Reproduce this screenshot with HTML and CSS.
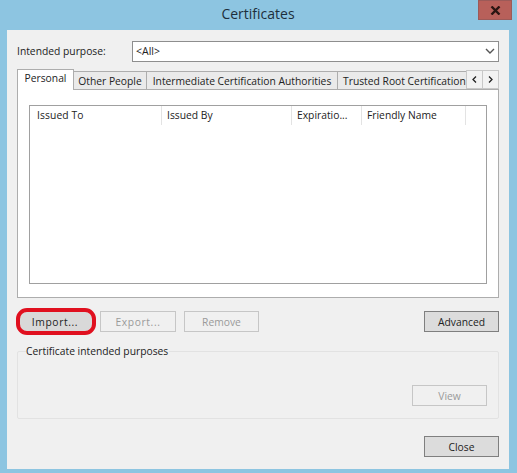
FILE: index.html
```html
<!DOCTYPE html>
<html lang="en">
<head>
<meta charset="utf-8">
<title>Certificates</title>
<link rel="stylesheet" href="styles.css">
</head>
<body>
<div class="window">
  <header class="titlebar">
    <span class="title">Certificates</span>
    <span class="close-x"><svg width="11" height="9" viewBox="0 0 11 9"><path d="M1.5 .5l8 8M9.5 .5l-8 8" fill="none" stroke="#2a1512" stroke-width="2.4"/></svg></span>
  </header>
  <main class="dialog">
    <div class="purpose">
      <label class="purpose-label">Intended purpose:</label>
      <div class="combo"><span>&lt;All&gt;</span><svg width="10" height="6" viewBox="0 0 10 6"><path d="M1 1l4 4 4-4" fill="none" stroke="#555" stroke-width="1.4"/></svg></div>
    </div>
    <div class="tabstrip">
      <div class="tab active">Personal</div>
      <div class="tab t-other">Other People</div>
      <div class="tab t-inter">Intermediate Certification Authorities</div>
      <div class="tab t-root">Trusted Root Certification</div>
      <div class="spin">
        <span><svg width="5" height="7" viewBox="0 0 5 7"><path d="M4 .5 1 3.5l3 3" fill="none" stroke="#222" stroke-width="1.3"/></svg></span>
        <span><svg width="5" height="7" viewBox="0 0 5 7"><path d="M1 .5l3 3-3 3" fill="none" stroke="#222" stroke-width="1.3"/></svg></span>
      </div>
    </div>
    <div class="panel">
      <div class="list">
        <div class="list-head">
          <div class="col c1">Issued To</div>
          <div class="col c2">Issued By</div>
          <div class="col c3">Expiratio...</div>
          <div class="col c4">Friendly Name</div>
        </div>
      </div>
    </div>
    <div class="actions">
      <button class="btn import">Import...</button>
      <button class="btn disabled export">Export...</button>
      <button class="btn disabled remove">Remove</button>
      <button class="btn advanced">Advanced</button>
    </div>
    <section class="group">
      <div class="group-label">Certificate intended purposes</div>
      <div class="group-foot"><button class="btn disabled">View</button></div>
    </section>
    <div class="footer"><button class="btn">Close</button></div>
  </main>
</div>
</body>
</html>
```
FILE: styles.css
```css
* { box-sizing: border-box; }
html, body { margin: 0; padding: 0; }
body { width: 517px; height: 473px; overflow: hidden; background: #8dc5e1; font-family: "Open Sans", "Noto Sans", sans-serif; font-size: 10.3px; color: #222; }
.window { display: flex; flex-direction: column; height: 473px; padding: 0 8px 4px 7px; }
.titlebar { position: relative; height: 30px; flex: none; display: flex; align-items: center; justify-content: center; padding-bottom: 3px; }
.title { font-size: 14px; color: #1d2f3c; }
.close-x { position: absolute; top: 0; right: -3px; width: 34px; height: 20px; background: #b8605a; border: 1px solid #9c5a58; display: flex; align-items: center; justify-content: center; }
.dialog { flex: 1; background: #f0f0f0; padding: 11px 10px 0 10px; display: flex; flex-direction: column; }
.purpose { display: flex; align-items: center; height: 20px; }
.purpose-label { width: 115px; }
.combo { flex: 1; height: 21px; background: #fff; border: 1px solid #8e8e8e; display: flex; align-items: center; justify-content: space-between; padding: 0 3px; font-size: 10.5px; }
.tabstrip { display: flex; align-items: flex-end; height: 21px; margin-top: 7px; position: relative; z-index: 1; }
.tab { height: 18px; background: #eaeaea; border: 1px solid #adadad; border-left: 0; border-bottom: 0; display: flex; align-items: center; justify-content: center; white-space: nowrap; overflow: hidden; }
.tab.active { width: 57px; height: 21px; background: #fff; border: 1px solid #adadad; border-bottom: 0; margin-bottom: -1px; padding-bottom: 4px; }
.t-other { width: 73px; }
.t-inter { width: 191px; }
.t-root { flex: 1; justify-content: flex-start; padding-left: 5px; min-width: 0; border-right: 0; }
.spin { display: flex; height: 19px; flex: none; }
.spin span { width: 16px; background: #f2f2f2; border: 1px solid #c8c8c8; border-left: 0; display: flex; align-items: center; justify-content: center; }
.spin span:first-child { width: 17px; border-left: 1px solid #c8c8c8; }
.panel { height: 209px; flex: none; background: #fff; border: 1px solid #adadad; padding: 15px 11px 13px; }
.list { height: 100%; border: 1px solid #a0a0a0; }
.list-head { display: flex; height: 19px; }
.col { padding-left: 5px; border-right: 1px solid #e3e3e3; line-height: 19px; white-space: nowrap; }
.c1 { width: 132px; padding-left: 7px; letter-spacing: .1px; }
.c2 { width: 130px; }
.c3 { width: 70px; }
.c4 { width: 104px; }
.actions { display: flex; margin-top: 13px; height: 21px; flex: none; }
.btn { width: 75px; height: 21px; padding: 0; background: #dcdcdc; border: 1px solid #7f7f7f; font: inherit; color: #222; }
.btn.disabled { background: #f0f0f0; border-color: #c6c6c6; color: #9a9a9a; }
.import { margin: 1px 8px 0 3px; width: 72px; height: 19px; background: #d9d9d9; border: 0; outline: 4px solid #e0101f; border-radius: 7px; letter-spacing: .6px; padding-right: 2px; }
.export { width: 76px; margin-right: 8px; letter-spacing: .6px; }
.advanced { margin-left: auto; }
.group { height: 68px; margin-top: 19px; flex: none; border: 1px solid #e2e2e2; border-radius: 2px; display: flex; flex-direction: column; position: relative; }
.group-label { position: absolute; top: -9px; left: 8px; background: #f0f0f0; padding-right: 1px; line-height: 16px; }
.group-foot { margin-top: auto; padding: 0 11px 12px 0; display: flex; justify-content: flex-end; }
.footer { margin-top: 17px; display: flex; justify-content: flex-end; }
```
